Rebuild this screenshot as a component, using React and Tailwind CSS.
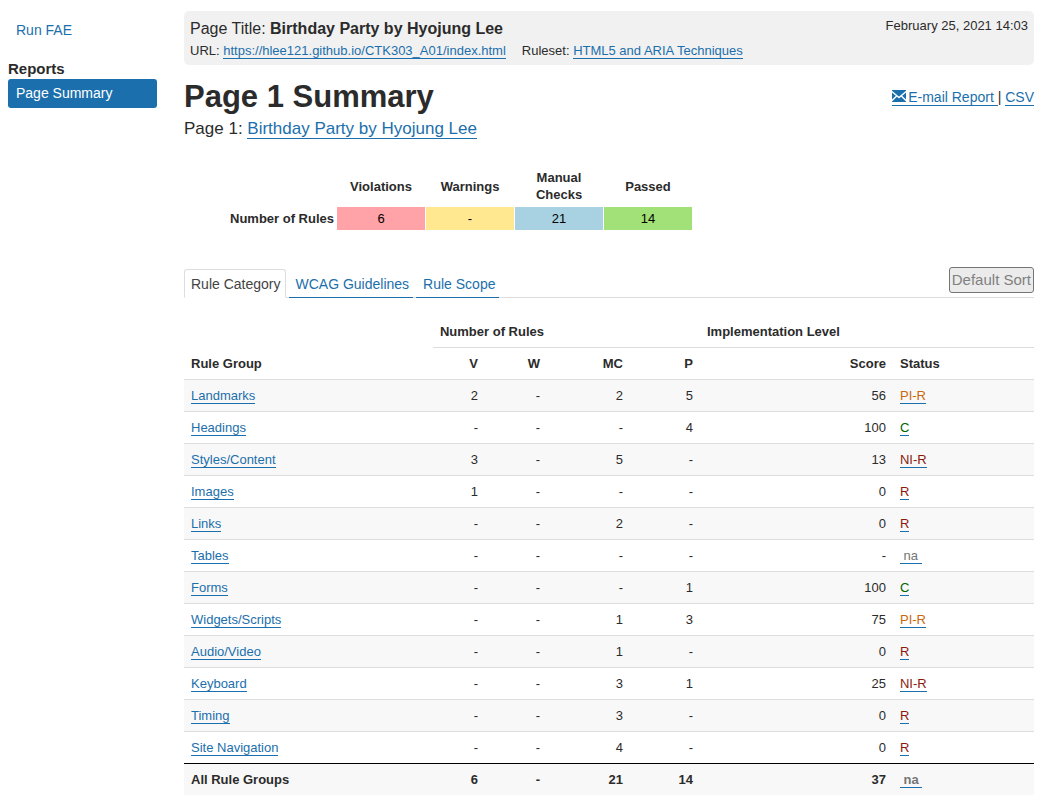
const statusColors = {
  "PI-R": "text-[#c9680c]",
  "NI-R": "text-[#8b1a0e]",
  R: "text-[#8b1a0e]",
  C: "text-[#006400]",
  na: "text-[#757575]",
};

const groups = [
  ["Landmarks", "2", "-", "2", "5", "56", "PI-R"],
  ["Headings", "-", "-", "-", "4", "100", "C"],
  ["Styles/Content", "3", "-", "5", "-", "13", "NI-R"],
  ["Images", "1", "-", "-", "-", "0", "R"],
  ["Links", "-", "-", "2", "-", "0", "R"],
  ["Tables", "-", "-", "-", "-", "-", "na"],
  ["Forms", "-", "-", "-", "1", "100", "C"],
  ["Widgets/Scripts", "-", "-", "1", "3", "75", "PI-R"],
  ["Audio/Video", "-", "-", "1", "-", "0", "R"],
  ["Keyboard", "-", "-", "3", "1", "25", "NI-R"],
  ["Timing", "-", "-", "3", "-", "0", "R"],
  ["Site Navigation", "-", "-", "4", "-", "0", "R"],
];

const totals = [
  { label: "Violations", value: "6", color: "bg-[#ffa3a8]" },
  { label: "Warnings", value: "-", color: "bg-[#ffe88f]" },
  { label: "Manual Checks", value: "21", color: "bg-[#a8d2e1]" },
  { label: "Passed", value: "14", color: "bg-[#a2e178]" },
];

function Link({ children, className = "text-[#1b6fac]" }) {
  return (
    <a href="#" className={`border-b border-[#1b6fac] ${className}`}>
      {children}
    </a>
  );
}

function Status({ value }) {
  return (
    <Link className={statusColors[value]}>
      {value === "na" ? "\u00a0na\u00a0" : value}
    </Link>
  );
}

function Envelope() {
  return (
    <svg viewBox="0 0 14 12" className="mr-0.5 inline-block h-3 w-3.5 align-baseline" aria-hidden="true">
      <path d="M0 0h14v12H0z" fill="#1b6fac" />
      <path d="M-0.5 1.2 7 7.6l7.5-6.4M-0.5 11 4.9 5.8M14.5 11 9.1 5.8" fill="none" stroke="#fff" strokeWidth="1.4" />
    </svg>
  );
}

function Sidebar() {
  return (
    <nav className="pt-4 text-sm" aria-label="Reports">
      <a href="#" className="block px-2 py-1 text-[#1b6fac]">Run FAE</a>
      <h2 className="mt-[15px] text-[15px] leading-5 font-bold">Reports</h2>
      <a href="#" aria-current="page" className="block rounded-[3px] bg-[#1b6fac] px-2 py-1 leading-[21px] text-white">
        Page Summary
      </a>
    </nav>
  );
}

function PageInfo() {
  return (
    <header className="flex justify-between rounded-[5px] bg-[#f1f1f1] px-1.5 pt-1.5 pb-1 text-[13px]">
      <div>
        <p className="text-base leading-6">
          Page Title: <strong>Birthday Party by Hyojung Lee</strong>
        </p>
        <p className="flex gap-4 leading-5">
          <span>URL: <Link>https://hlee121.github.io/CTK303_A01/index.html</Link></span>
          <span>Ruleset: <Link>HTML5 and ARIA Techniques</Link></span>
        </p>
      </div>
      <time className="leading-[18px]">February 25, 2021 14:03</time>
    </header>
  );
}

function Totals() {
  return (
    <table className="mt-6 ml-[45px] w-[464px] table-fixed border-separate border-spacing-x-px border-spacing-y-0 text-[13px] leading-[17px]">
      <thead>
        <tr>
          <td />
          {totals.map((t) => (
            <th key={t.label} scope="col" className="w-[88px] px-2.5 py-1 align-middle">{t.label}</th>
          ))}
        </tr>
      </thead>
      <tbody>
        <tr>
          <th scope="row" className="pr-1 text-right whitespace-nowrap">Number of Rules</th>
          {totals.map((t) => (
            <td key={t.label} className={`py-[3px] text-center text-black ${t.color}`}>{t.value}</td>
          ))}
        </tr>
      </tbody>
    </table>
  );
}

function Tabs() {
  return (
    <div className="mt-[37px] flex items-end justify-between border-b border-[#ddd]">
      <div role="tablist" className="-mb-px flex gap-[3px] text-sm leading-[22px]">
        <button type="button" role="tab" aria-selected="true" className="rounded-t-[3px] border border-b-white border-[#ddd] pt-[3px] pr-1 pb-0.5 pl-1.5 text-[#444]">
          Rule Category
        </button>
        <button type="button" role="tab" aria-selected="false" className="border-b border-[#1b6fac] pt-1 pr-1 pb-0.5 pl-[7px] text-[#1b6fac]">
          WCAG Guidelines
        </button>
        <button type="button" role="tab" aria-selected="false" className="border-b border-[#1b6fac] pt-1 pr-1 pb-0.5 pl-[7px] text-[#1b6fac]">
          Rule Scope
        </button>
      </div>
      <button type="button" disabled className="mb-1 rounded-[3px] border border-[#757575] bg-[#ebebeb] px-0.5 text-[15px] leading-6 text-[#808080]">
        Default Sort
      </button>
    </div>
  );
}

function Results() {
  return (
    <table className="mt-[17px] w-full table-fixed border-separate border-spacing-0 text-right text-[13px] leading-[17px] [&_td]:h-8 [&_td]:border-t [&_td]:border-[#ddd] [&_td]:px-[7px] [&_th]:h-8 [&_th]:px-[7px]">
      <colgroup>
        <col />
        <col className="w-[52px]" />
        <col className="w-[62px]" />
        <col className="w-[83px]" />
        <col className="w-[70px]" />
        <col className="w-[193px]" />
        <col className="w-[141px]" />
      </colgroup>
      <thead>
        <tr>
          <th rowSpan={2} scope="col" className="pb-[7px] text-left align-bottom">Rule Group</th>
          <th colSpan={4} scope="colgroup" className="text-left">Number of Rules</th>
          <th colSpan={2} scope="colgroup" className="text-left">Implementation Level</th>
        </tr>
        <tr className="[&_th]:border-t [&_th]:border-[#ddd]">
          <th scope="col">V</th>
          <th scope="col">W</th>
          <th scope="col">MC</th>
          <th scope="col">P</th>
          <th scope="col">Score</th>
          <th scope="col" className="text-left">Status</th>
        </tr>
      </thead>
      <tbody>
        {groups.map(([name, v, w, mc, p, score, status]) => (
          <tr key={name} className="odd:bg-[#f8f8f8]">
            <td className="text-left"><Link>{name}</Link></td>
            <td>{v}</td>
            <td>{w}</td>
            <td>{mc}</td>
            <td>{p}</td>
            <td>{score}</td>
            <td className="text-left"><Status value={status} /></td>
          </tr>
        ))}
      </tbody>
      <tfoot>
        <tr className="bg-[#f8f8f8] [&_th]:border-t [&_th]:border-black">
          <th scope="row" className="text-left">All Rule Groups</th>
          <th>6</th>
          <th>-</th>
          <th>21</th>
          <th>14</th>
          <th>37</th>
          <th className="text-left"><Status value="na" /></th>
        </tr>
      </tfoot>
    </table>
  );
}

export default function App() {
  return (
    <div className="grid grid-cols-[149px_minmax(0,1fr)] gap-x-[27px] bg-white pr-[17px] pb-2.5 pl-2 font-['Liberation_Sans',Arial,sans-serif] text-[#2b2b2b]">
      <Sidebar />
      <main className="pt-[11px]">
        <PageInfo />
        <div className="mt-3 flex items-start justify-between">
          <div>
            <h1 className="text-[31px] leading-10 font-bold">Page 1 Summary</h1>
            <p className="text-[17px] leading-6">
              Page 1: <Link>Birthday Party by Hyojung Lee</Link>
            </p>
          </div>
          <p className="mt-2.5 text-sm leading-5">
            <Link><Envelope />E-mail Report </Link>| <Link>CSV</Link>
          </p>
        </div>
        <Totals />
        <Tabs />
        <Results />
      </main>
    </div>
  );
}
